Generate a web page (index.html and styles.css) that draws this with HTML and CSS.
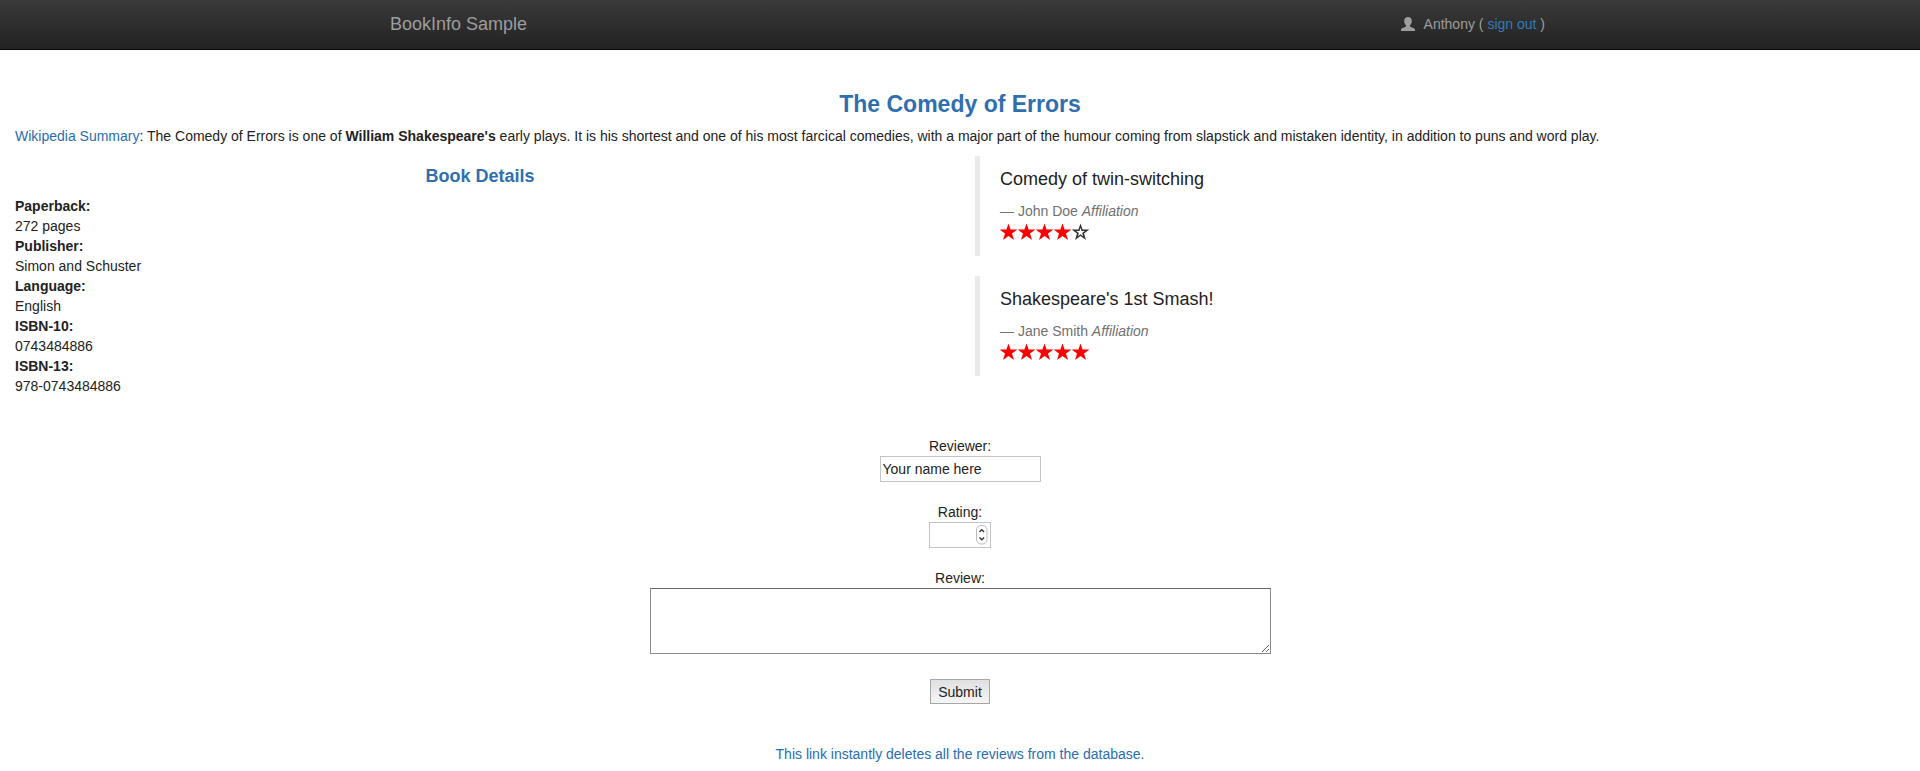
FILE: index.html
```
<!DOCTYPE html>
<html lang="en">
<head>
<meta charset="utf-8">
<meta name="viewport" content="width=device-width, initial-scale=1">
<title>BookInfo Sample</title>
<link rel="stylesheet" href="styles.css">
</head>
<body>
<svg class="sprite" aria-hidden="true">
  <symbol id="star" viewBox="0 0 18 18"><path d="M8.5 0.4 L10.6 6.5 H17.4 L12 10.4 L14 17 L8.5 13 L3 17 L5 10.4 L-0.4 6.5 H6.4 Z"/></symbol>
  <symbol id="star-empty" viewBox="0 0 18 18"><path fill-rule="evenodd" d="M8.5 0.4 L10.6 6.5 H17.4 L12 10.4 L14 17 L8.5 13 L3 17 L5 10.4 L-0.4 6.5 H6.4 Z M8.5 4.8 L7.5 8 H4.2 L6.9 10 L5.9 13.2 L8.5 11.2 L11.1 13.2 L10.1 10 L12.8 8 H9.5 Z"/></symbol>
</svg>
<nav class="navbar">
  <div class="navbar-inner">
    <a class="brand" href="#">BookInfo Sample</a>
    <p class="user">
      <svg class="user-icon" viewBox="0 0 14 14" aria-hidden="true"><path d="M7 0C4.7 0 3.2 1.5 3.2 3.9C3.2 5.8 3.9 7.4 5 8.3V9.2C4.7 9.9 3 10.4 1.6 11C.4 11.5 0 12 0 12.8V14H14V12.8C14 12 13.6 11.5 12.4 11C11 10.4 9.3 9.9 9 9.2V8.3C10.1 7.4 10.8 5.8 10.8 3.9C10.8 1.5 9.3 0 7 0Z"/></svg>
      <span>Anthony ( <a href="#">sign out</a> )</span>
    </p>
  </div>
</nav>
<main class="page">
  <h3 class="title">The Comedy of Errors</h3>
  <p class="summary"><a href="#">Wikipedia Summary</a>: The Comedy of Errors is one of <b>William Shakespeare's</b> early plays. It is his shortest and one of his most farcical comedies, with a major part of the humour coming from slapstick and mistaken identity, in addition to puns and word play.</p>
  <div class="row">
    <section class="details">
      <h4 class="subtitle">Book Details</h4>
      <dl class="facts">
        <dt>Paperback:</dt><dd>272 pages</dd>
        <dt>Publisher:</dt><dd>Simon and Schuster</dd>
        <dt>Language:</dt><dd>English</dd>
        <dt>ISBN-10:</dt><dd>0743484886</dd>
        <dt>ISBN-13:</dt><dd>978-0743484886</dd>
      </dl>
    </section>
    <section class="reviews">
      <blockquote class="review">
        <p class="quote">Comedy of twin-switching</p>
        <small class="author">— John Doe <cite>Affiliation</cite></small>
        <div class="stars" role="img" aria-label="4 out of 5 stars">
          <svg class="star"><use href="#star"/></svg><svg class="star"><use href="#star"/></svg><svg class="star"><use href="#star"/></svg><svg class="star"><use href="#star"/></svg><svg class="star star-off"><use href="#star-empty"/></svg>
        </div>
      </blockquote>
      <blockquote class="review">
        <p class="quote">Shakespeare's 1st Smash!</p>
        <small class="author">— Jane Smith <cite>Affiliation</cite></small>
        <div class="stars" role="img" aria-label="5 out of 5 stars">
          <svg class="star"><use href="#star"/></svg><svg class="star"><use href="#star"/></svg><svg class="star"><use href="#star"/></svg><svg class="star"><use href="#star"/></svg><svg class="star"><use href="#star"/></svg>
        </div>
      </blockquote>
    </section>
  </div>
  <form class="form">
    <div class="field">
      <label for="reviewer">Reviewer:</label>
      <input class="input input-name" id="reviewer" type="text" value="Your name here">
    </div>
    <div class="field">
      <label for="rating">Rating:</label>
      <div class="number">
        <input class="input input-rating" id="rating" type="number" min="1" max="5">
        <svg class="stepper" viewBox="0 0 12 20" aria-hidden="true"><rect x="0.5" y="0.5" width="10.5" height="18.5" rx="4.5"/><path d="M3.5 7 L5.8 4.8 L8.1 7 M3.5 12.5 L5.8 14.7 L8.1 12.5"/></svg>
      </div>
    </div>
    <div class="field">
      <label for="review">Review:</label>
      <textarea class="textarea" id="review"></textarea>
    </div>
    <button class="submit" type="submit">Submit</button>
  </form>
  <p class="delete"><a href="#">This link instantly deletes all the reviews from the database.</a></p>
</main>
</body>
</html>
```
FILE: styles.css
```
* { box-sizing: border-box; }
body {
  margin: 0;
  background: #fff;
  color: #222;
  font: 14px/20px "Liberation Sans", Arial, sans-serif;
}
a { color: #2a6db0; text-decoration: none; }
.sprite { display: none; }

.navbar {
  height: 50px;
  border-bottom: 1px solid #080808;
  background: linear-gradient(#3a3a3a, #222);
  color: #9d9d9d;
}
.navbar-inner {
  display: flex;
  align-items: center;
  justify-content: space-between;
  max-width: 1170px;
  height: 48px;
  margin: 0 auto;
  padding-left: 15px;
}
.brand { color: #9d9d9d; font-size: 18px; }
.user { display: flex; align-items: center; gap: 9px; margin: 0; }
.user a { color: #337ab7; }
.user-icon { width: 14px; height: 14px; fill: #9d9d9d; }

.page { padding: 40px 15px 0; }
.title {
  margin: 0 0 8px;
  color: #2f6fb0;
  font-size: 23px;
  line-height: 28px;
  text-align: center;
}
.summary { margin: 0 0 10px; }
.row { display: grid; grid-template-columns: 1fr 1fr; column-gap: 30px; }
.subtitle {
  margin: 10px 0;
  color: #2f6fb0;
  font-size: 18px;
  line-height: 20px;
  text-align: center;
}
.facts { margin: 0; }
.facts dt { font-weight: bold; }
.facts dd { margin: 0; }

.review {
  margin: 0 0 20px;
  padding: 10px 20px;
  border-left: 5px solid #eaeaea;
}
.quote { margin: 0 0 8px; font-size: 18px; line-height: 27px; }
.author { display: block; color: #707070; font-size: 14px; }
.stars { display: flex; height: 25px; }
.star { width: 18px; height: 18px; margin-top: 2px; fill: #f00; overflow: visible; }
.star-off { fill: #333; }

.form {
  display: flex;
  flex-direction: column;
  align-items: center;
  gap: 20px;
  padding-top: 40px;
}
.field { display: flex; flex-direction: column; align-items: center; }
.input {
  height: 26px;
  padding: 1px 2px;
  border: 1px solid #c4c4c4;
  background: #fff;
  color: #222;
  font: inherit;
}
.input-name { width: 161px; }
.number { position: relative; }
.input-rating { display: block; width: 62px; appearance: textfield; }
.stepper {
  position: absolute;
  top: 3px;
  right: 3px;
  width: 12px;
  height: 20px;
  fill: #fff;
  stroke: #bbb;
  pointer-events: none;
}
.stepper path { fill: none; stroke: #333; stroke-width: 1.4; }
.textarea {
  display: block;
  width: 621px;
  max-width: 100%;
  height: 66px;
  padding: 2px;
  border: 1px solid #8c8c8c;
  border-top-color: #696969;
  font: inherit;
}
.submit {
  height: 25px;
  margin-top: 5px;
  padding: 0 7px;
  border: 1px solid #a6a6a6;
  background: linear-gradient(#e0e0e0, #f5f5f5);
  color: #222;
  font: inherit;
}
.delete { margin: 40px 0 0; text-align: center; }
```
